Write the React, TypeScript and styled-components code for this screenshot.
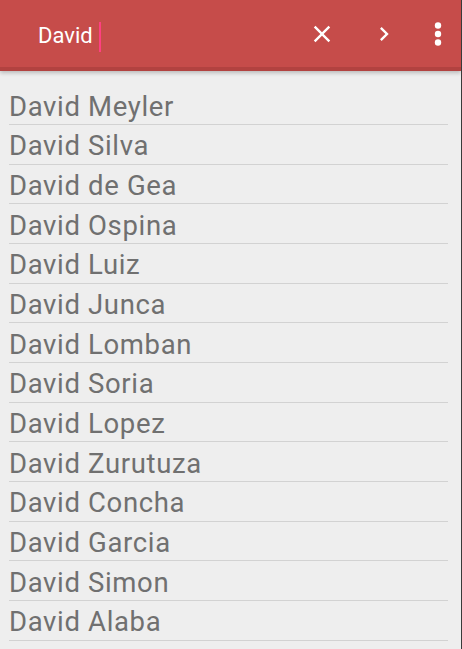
import React from "react";
import styled, { createGlobalStyle } from "styled-components";

const GlobalStyle = createGlobalStyle`
  html, body {
    margin: 0;
    padding: 0;
    background: #eeeeee;
  }
  body {
    font-family: Roboto, "Noto Sans", sans-serif;
  }
`;

const Screen = styled.div`
  width: 462px;
  height: 649px;
  overflow: hidden;
  background: #eeeeee;
  border-right: 1px solid #3a3a3a;
  box-sizing: border-box;
  display: flex;
  flex-direction: column;
`;

const Toolbar = styled.header`
  height: 67px;
  flex-shrink: 0;
  background: #c64c4a;
  border-bottom: 4px solid #b24240;
  box-shadow: 0 2px 4px rgba(0, 0, 0, 0.22);
  display: flex;
  align-items: center;
  padding: 0 0 0 38px;
  position: relative;
  z-index: 1;
`;

const SearchField = styled.div`
  flex: 1;
  display: flex;
  align-items: center;
  height: 100%;
`;

const Query = styled.span`
  color: #ffffff;
  font-size: 22px;
  line-height: 1;
  margin-top: 5px;
`;

const Caret = styled.span`
  width: 2px;
  height: 30px;
  margin-left: 6px;
  margin-top: 6px;
  background: #ff4081;
`;

const IconButton = styled.button<{ $w: number }>`
  width: ${(p) => p.$w}px;
  height: 100%;
  padding: 0;
  border: 0;
  background: transparent;
  color: #ffffff;
  display: flex;
  align-items: center;
  justify-content: center;
  cursor: pointer;
`;

const List = styled.ul`
  list-style: none;
  margin: 0 13px 0 9px;
  padding: 14.5px 0 0;
`;

const Row = styled.li`
  height: 39.67px;
  box-sizing: border-box;
  border-bottom: 1px solid #d2d2d2;
  display: flex;
  align-items: flex-end;
  padding-bottom: 4px;
  font-size: 27.5px;
  letter-spacing: 0.65px;
  line-height: 1;
  color: #707070;
`;

const names = [
  "David Meyler",
  "David Silva",
  "David de Gea",
  "David Ospina",
  "David Luiz",
  "David Junca",
  "David Lomban",
  "David Soria",
  "David Lopez",
  "David Zurutuza",
  "David Concha",
  "David Garcia",
  "David Simon",
  "David Alaba",
];

function App() {
  return (
    <>
      <GlobalStyle />
      <Screen>
        <Toolbar>
          <SearchField>
            <Query>David</Query>
            <Caret />
          </SearchField>
          <IconButton $w={62} aria-label="clear">
            <svg width="28" height="28" viewBox="0 0 24 24" fill="currentColor">
              <path d="M19 6.41L17.59 5 12 10.59 6.41 5 5 6.41 10.59 12 5 17.59 6.41 19 12 13.41 17.59 19 19 17.59 13.41 12z" />
            </svg>
          </IconButton>
          <IconButton $w={62} aria-label="next">
            <svg width="28" height="28" viewBox="0 0 24 24" fill="currentColor">
              <path d="M10 6L8.59 7.41 13.17 12l-4.58 4.59L10 18l6-6z" />
            </svg>
          </IconButton>
          <IconButton $w={46} aria-label="more">
            <svg width="8" height="24" viewBox="0 0 8 24" fill="currentColor">
              <circle cx="4" cy="3.5" r="3.2" />
              <circle cx="4" cy="12" r="3.2" />
              <circle cx="4" cy="20.5" r="3.2" />
            </svg>
          </IconButton>
        </Toolbar>
        <List>
          {names.map((n) => (
            <Row key={n}>{n}</Row>
          ))}
        </List>
      </Screen>
    </>
  );
}

export default App;
